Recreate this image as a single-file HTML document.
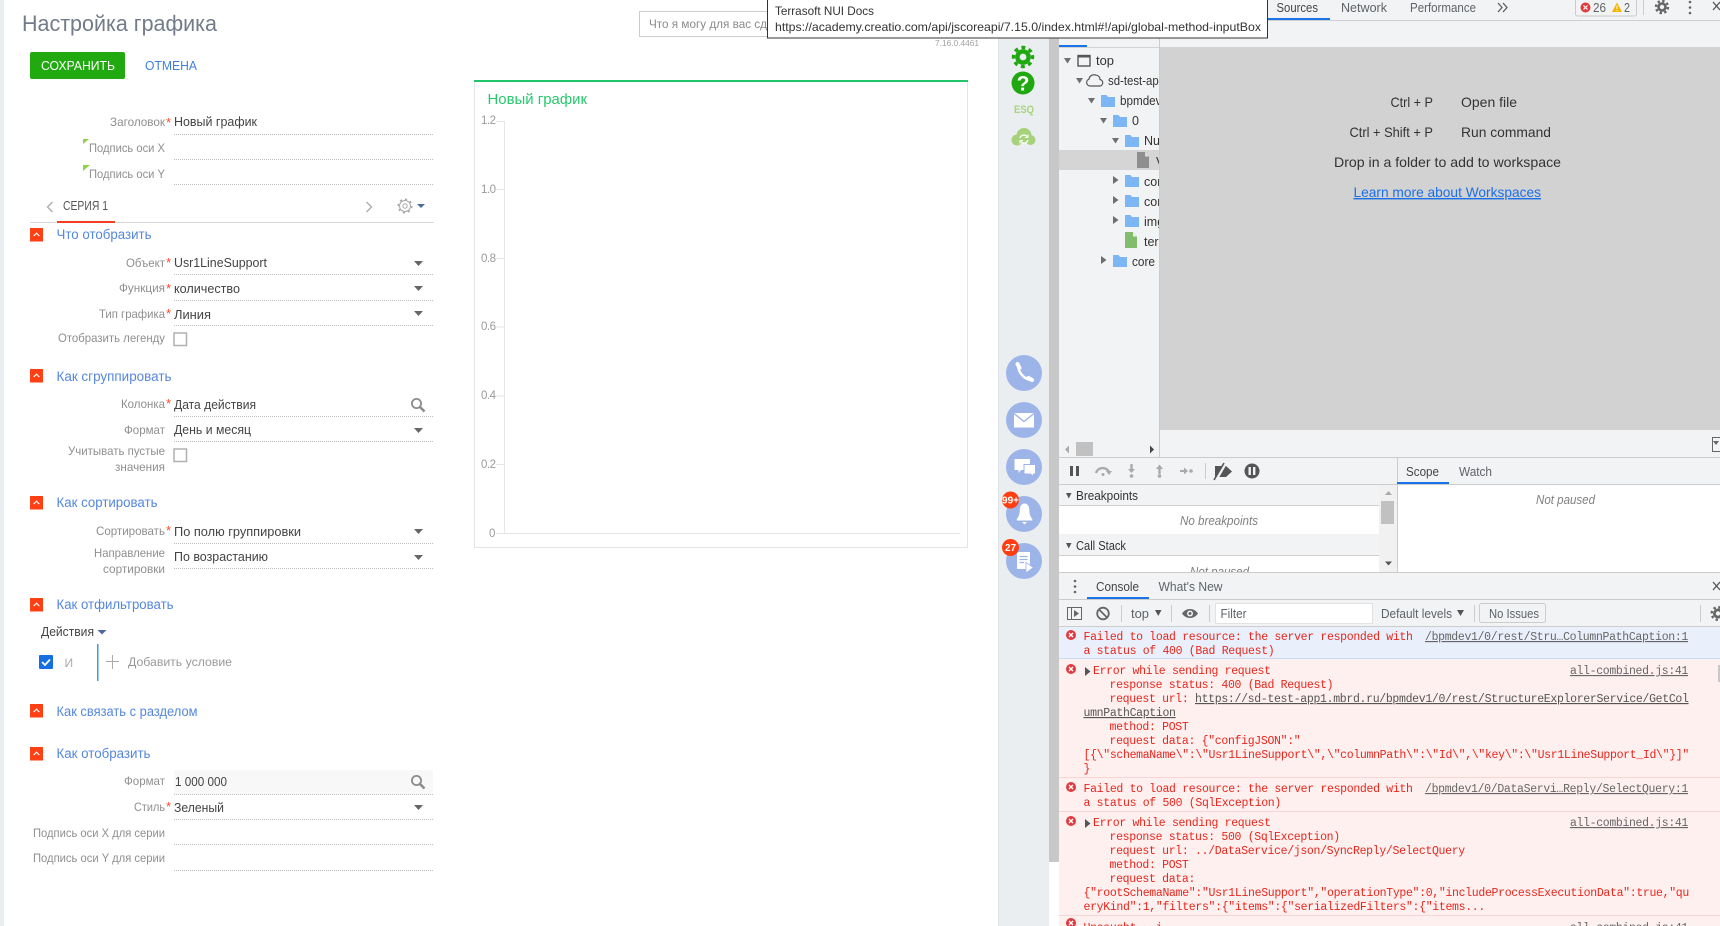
<!DOCTYPE html>
<html lang="ru">
<head>
<meta charset="utf-8">
<title>Настройка графика</title>
<style>
html,body{margin:0;padding:0;background:#fff;width:1720px;height:926px;overflow:hidden}
svg{display:block;font-family:"Liberation Sans","Noto Sans CJK SC",sans-serif}
text{white-space:pre}
.lb{font-size:12px;fill:#8f8f8f}
.v{font-size:13px;fill:#444}
.h{font-size:13.5px;fill:#5587dc}
.st{font-size:13px;fill:#ff4a2a}
.dt{font-size:12.5px;fill:#444}
.dg{font-size:12.5px;fill:#5f6368}
.it{font-size:12.5px;fill:#808080;font-style:italic}
.wk{font-size:14px;fill:#333}
.tr{font-size:12.5px;fill:#333}
.m{font-family:"Liberation Mono",monospace;font-size:11.5px;letter-spacing:-.32px;fill:#e8261c}
.k{font-family:"Liberation Mono",monospace;font-size:11.5px;letter-spacing:-.32px;fill:#555;text-decoration:underline}
.ku{font-family:"Liberation Mono",monospace;font-size:11.5px;letter-spacing:-.32px;fill:#666;text-decoration:underline}
.ax{font-size:11.5px;fill:#9a9a9a}
.dl{stroke:#bdbdbd;stroke-width:1;stroke-dasharray:1 1}
</style>
</head>
<body>
<svg xmlns="http://www.w3.org/2000/svg" width="1720" height="926" viewBox="0 0 1720 926">
<defs>
<g id="red"><rect width="13" height="13.5" fill="#ff3f14"/><path d="M3.7 8 6.5 5.2 9.3 8" fill="none" stroke="#fff" stroke-width="1.2"/></g>
<path id="car" d="M0 0H9L4.5 5Z" fill="#666"/>
<g id="srch" fill="none" stroke="#8c8c8c"><circle cx="5.5" cy="5.5" r="4.6" stroke-width="1.8"/><path d="M9 9 13.5 13.5" stroke-width="2.6"/></g>
<path id="fold" d="M0 0H5.5L7 2H14V12H0Z" fill="#7db6f4"/>
<path id="ta" d="M0 0H7L3.5 5.5Z" fill="#6e6e6e"/>
<path id="tr" d="M0 0 5.5 4 0 8Z" fill="#6e6e6e"/>
<g id="err"><circle r="5" fill="#e0393e"/><path d="M-2-2 2 2M2-2-2 2" stroke="#fff" stroke-width="1.4"/></g>
</defs>

<!-- left page -->
<rect width="4" height="926" fill="#e9edef"/>
<text x="22" y="31" font-size="22" fill="#737b8a" textLength="195" lengthAdjust="spacingAndGlyphs">Настройка графика</text>
<rect x="30" y="52" width="95" height="27" rx="2" fill="#20aa10"/>
<text x="41" y="70" font-size="13" fill="#fff" textLength="74" lengthAdjust="spacingAndGlyphs">СОХРАНИТЬ</text>
<text x="145" y="70" font-size="13" fill="#3f7fe0" textLength="52" lengthAdjust="spacingAndGlyphs">ОТМЕНА</text>

<text class="lb" x="110" y="126" textLength="55" lengthAdjust="spacingAndGlyphs">Заголовок</text><text class="st" x="166" y="127">*</text>
<text class="v" x="174" y="126" textLength="83" lengthAdjust="spacingAndGlyphs">Новый график</text>
<path class="dl" d="M174 134.500H434"/>
<path d="M83 139H89L83 144Z" fill="#8fd14f"/>
<text class="lb" x="89" y="152" textLength="76" lengthAdjust="spacingAndGlyphs">Подпись оси X</text>
<path class="dl" d="M174 159.500H434"/>
<path d="M83 165H90L83 171Z" fill="#8fd14f"/>
<text class="lb" x="89" y="178" textLength="76" lengthAdjust="spacingAndGlyphs">Подпись оси Y</text>
<path class="dl" d="M174 184.500H434"/>

<path d="M52.500 202 47.500 207 52.500 212" fill="none" stroke="#aaa" stroke-width="1.300"/>
<text x="63" y="210" font-size="13" fill="#555" textLength="45" lengthAdjust="spacingAndGlyphs">СЕРИЯ 1</text>
<rect x="30" y="222" width="404" height="1" fill="#d8d8d8"/>
<rect x="57" y="221" width="58" height="2" fill="#f0401e"/>
<path d="M366.500 202 371.500 207 366.500 212" fill="none" stroke="#aaa" stroke-width="1.300"/>
<circle cx="405" cy="206" r="5.500" fill="none" stroke="#a8a8a8" stroke-width="1"/><circle cx="405" cy="206" r="6.800" fill="none" stroke="#a8a8a8" stroke-width="1.500" stroke-dasharray="2.200 3.100"/><circle cx="405" cy="206" r="2.200" fill="none" stroke="#a8a8a8"/>
<path d="M417 204H425L421 208Z" fill="#4b6a9b"/>

<use href="#red" x="30" y="228"/>
<text class="h" x="56.500" y="239" textLength="95" lengthAdjust="spacingAndGlyphs">Что отобразить</text>
<text class="lb" x="126" y="267" textLength="39" lengthAdjust="spacingAndGlyphs">Объект</text><text class="st" x="166" y="267">*</text>
<text class="v" x="174" y="267" textLength="93" lengthAdjust="spacingAndGlyphs">Usr1LineSupport</text>
<use href="#car" x="414" y="261"/><path class="dl" d="M174 274.500H434"/>
<text class="lb" x="119" y="292" textLength="46" lengthAdjust="spacingAndGlyphs">Функция</text><text class="st" x="166" y="293">*</text>
<text class="v" x="174" y="293" textLength="66" lengthAdjust="spacingAndGlyphs">количество</text>
<use href="#car" x="414" y="286"/><path class="dl" d="M174 300.500H434"/>
<text class="lb" x="99" y="318" textLength="66" lengthAdjust="spacingAndGlyphs">Тип графика</text><text class="st" x="166" y="318">*</text>
<text class="v" x="174" y="319" textLength="37" lengthAdjust="spacingAndGlyphs">Линия</text>
<use href="#car" x="414" y="311"/><path class="dl" d="M174 325.500H434"/>
<text class="lb" x="58" y="342" textLength="107" lengthAdjust="spacingAndGlyphs">Отобразить легенду</text>
<rect x="174" y="333" width="12.500" height="12.500" fill="#fff" stroke="#b0b0b0" stroke-width="1.500"/>

<use href="#red" x="30" y="369"/>
<text class="h" x="56.500" y="381" textLength="115" lengthAdjust="spacingAndGlyphs">Как сгруппировать</text>
<text class="lb" x="121" y="408" textLength="44" lengthAdjust="spacingAndGlyphs">Колонка</text><text class="st" x="166" y="408">*</text>
<text class="v" x="174" y="409" textLength="82" lengthAdjust="spacingAndGlyphs">Дата действия</text>
<use href="#srch" x="411" y="398"/><path class="dl" d="M174 416.500H434"/>
<text class="lb" x="124" y="434" textLength="41" lengthAdjust="spacingAndGlyphs">Формат</text>
<text class="v" x="174" y="434" textLength="77" lengthAdjust="spacingAndGlyphs">День и месяц</text>
<use href="#car" x="414" y="428"/><path class="dl" d="M174 441.500H434"/>
<text class="lb" x="68" y="455" textLength="97" lengthAdjust="spacingAndGlyphs">Учитывать пустые</text>
<text class="lb" x="115" y="471" textLength="50" lengthAdjust="spacingAndGlyphs">значения</text>
<rect x="174" y="449" width="12.500" height="12.500" fill="#fff" stroke="#b0b0b0" stroke-width="1.500"/>

<use href="#red" x="30" y="496"/>
<text class="h" x="56.500" y="507" textLength="101" lengthAdjust="spacingAndGlyphs">Как сортировать</text>
<text class="lb" x="96" y="535" textLength="69" lengthAdjust="spacingAndGlyphs">Сортировать</text><text class="st" x="166" y="535">*</text>
<text class="v" x="174" y="536" textLength="127" lengthAdjust="spacingAndGlyphs">По полю группировки</text>
<use href="#car" x="414" y="529"/><path class="dl" d="M174 543.500H434"/>
<text class="lb" x="94" y="557" textLength="71" lengthAdjust="spacingAndGlyphs">Направление</text>
<text class="lb" x="103" y="573" textLength="62" lengthAdjust="spacingAndGlyphs">сортировки</text>
<text class="v" x="174" y="561" textLength="94" lengthAdjust="spacingAndGlyphs">По возрастанию</text>
<use href="#car" x="414" y="555"/><path class="dl" d="M174 568.500H434"/>

<use href="#red" x="30" y="598"/>
<text class="h" x="56.500" y="609" textLength="117" lengthAdjust="spacingAndGlyphs">Как отфильтровать</text>
<text x="41" y="636" font-size="13" fill="#444" textLength="53" lengthAdjust="spacingAndGlyphs">Действия</text>
<path d="M97.500 630H106.500L102 634.500Z" fill="#4b6a9b"/>
<rect x="39" y="655" width="14" height="14" rx="1" fill="#166fe0"/><path d="M42 662 45 665 50 659.500" fill="none" stroke="#fff" stroke-width="1.800"/>
<text x="64.500" y="667" font-size="12" fill="#aaa">И</text>
<rect x="97" y="644" width="1.500" height="37" fill="#3b9ed8"/>
<path d="M112.500 655V669M106 661.500H119" stroke="#aaa" stroke-width="1" fill="none"/>
<text x="128" y="666" font-size="12" fill="#999" textLength="104" lengthAdjust="spacingAndGlyphs">Добавить условие</text>

<use href="#red" x="30" y="704"/>
<text class="h" x="56.500" y="716" textLength="141" lengthAdjust="spacingAndGlyphs">Как связать с разделом</text>
<use href="#red" x="30" y="747"/>
<text class="h" x="56.500" y="758" textLength="94" lengthAdjust="spacingAndGlyphs">Как отобразить</text>
<text class="lb" x="124" y="785" textLength="41" lengthAdjust="spacingAndGlyphs">Формат</text>
<rect x="174" y="770" width="259" height="24" fill="#f8f8f8"/>
<text class="v" x="175" y="786" textLength="52" lengthAdjust="spacingAndGlyphs">1 000 000</text>
<use href="#srch" x="411" y="775"/><path class="dl" d="M174 794.500H434"/>
<text class="lb" x="134" y="811" textLength="31" lengthAdjust="spacingAndGlyphs">Стиль</text><text class="st" x="166" y="811">*</text>
<text class="v" x="174" y="812" textLength="50" lengthAdjust="spacingAndGlyphs">Зеленый</text>
<use href="#car" x="414" y="805"/><path class="dl" d="M174 819.500H434"/>
<text class="lb" x="33" y="837" textLength="132" lengthAdjust="spacingAndGlyphs">Подпись оси X для серии</text>
<path class="dl" d="M174 844.500H434"/>
<text class="lb" x="33" y="862" textLength="132" lengthAdjust="spacingAndGlyphs">Подпись оси Y для серии</text>
<path class="dl" d="M174 870.500H434"/>

<!-- search + chart -->
<rect x="639.500" y="11.500" width="140" height="25" fill="#fff" stroke="#ccc"/>
<text x="649" y="28" font-size="12" fill="#8a8a8a" textLength="118" lengthAdjust="spacingAndGlyphs">Что я могу для вас сд</text>
<text x="935" y="46" font-size="8.500" fill="#a0a0a0" textLength="44" lengthAdjust="spacingAndGlyphs">7.16.0.4461</text>
<rect x="474.500" y="81.500" width="493" height="466" fill="#fff" stroke="#e4e4e4"/>
<rect x="474" y="80" width="494" height="2" fill="#1fc669"/>
<text x="487.500" y="104" font-size="15" fill="#26c96e" textLength="99.500" lengthAdjust="spacingAndGlyphs">Новый график</text>
<path d="M504.500 121V533M496 121.500H504.500M496 189.500H504.500M496 258.500H504.500M496 327H504.500M496 396H504.500M496 464.500H504.500M496 533.500H960" stroke="#e6e6e6" fill="none"/>
<text class="ax" x="481" y="124" textLength="15">1.2</text>
<text class="ax" x="481" y="193" textLength="15">1.0</text>
<text class="ax" x="481" y="262" textLength="15">0.8</text>
<text class="ax" x="481" y="330" textLength="15">0.6</text>
<text class="ax" x="481" y="399" textLength="15">0.4</text>
<text class="ax" x="481" y="468" textLength="15">0.2</text>
<text class="ax" x="489" y="537">0</text>

<!-- sidebar -->
<rect x="998" width="51" height="926" fill="#eaeef0"/>
<rect x="998" width="1" height="926" fill="#dfe4e6"/>
<rect x="1049" width="10" height="862" fill="#c8c8c8"/>
<circle cx="1023" cy="57" r="7.800" fill="#1fa80f"/><circle cx="1023" cy="57" r="9.500" fill="none" stroke="#1fa80f" stroke-width="3.400" stroke-dasharray="3.800 3.660" transform="rotate(-11 1023 57)"/><circle cx="1023" cy="57" r="3.400" fill="#eaeef0"/>
<circle cx="1023" cy="83" r="11.500" fill="#1fa80f"/><text x="1023" y="90.500" font-size="21" font-weight="bold" fill="#fff" text-anchor="middle">?</text>
<text x="1014" y="113" font-size="11" font-weight="bold" fill="#a9d47e" textLength="20" lengthAdjust="spacingAndGlyphs">ESQ</text>
<g fill="#a5d27a"><circle cx="1024" cy="135.500" r="7.500"/><circle cx="1017" cy="140" r="5.500"/><circle cx="1030.500" cy="140" r="5"/></g>
<path d="M1020 138a4 4 0 0 1 7-1.500M1028 140a4 4 0 0 1-7 1.500" fill="none" stroke="#fff" stroke-width="1.300"/>
<path d="M1028 134.500V137.500H1025M1020 143.500V140.500H1023" fill="none" stroke="#fff" stroke-width="1"/>

<circle cx="1024" cy="373" r="18" fill="#9db4e9"/>
<path d="M1018 365.500C1018.500 373 1024.500 379.500 1031.500 380" fill="none" stroke="#fff" stroke-width="2.400"/><path d="M1017.500 364 1019.500 368M1028.500 378 1032 380" stroke="#fff" stroke-width="4" stroke-linecap="round"/>
<circle cx="1024" cy="420" r="18" fill="#9db4e9"/>
<rect x="1014" y="413" width="20" height="14.500" fill="#fff"/><path d="M1014 413.500 1024 421.500 1034 413.500" fill="none" stroke="#9db4e9" stroke-width="1.400"/>
<circle cx="1024" cy="467" r="18" fill="#9db4e9"/>
<path d="M1014.500 459H1030V470H1021L1018.500 473V470H1014.500Z" fill="#fff"/>
<path d="M1024 464.500H1035.500V474H1033.500V476.500L1030.500 474H1024Z" fill="#fff" stroke="#9db4e9"/>
<circle cx="1024" cy="514" r="18" fill="#9db4e9"/>
<path d="M1024.500 503.500c-3.500 0-4.700 3.500-4.700 6.500 0 4-1.300 7-3 9v1.500h15.500v-1.500c-1.700-2-3-5-3-9 0-3-1.300-6.500-4.800-6.500Z" fill="#fff"/><path d="M1022 522H1027L1024.500 524.500Z" fill="#fff"/>
<circle cx="1024" cy="561" r="18" fill="#9db4e9"/>
<path d="M1017 552H1030V569H1017Z" fill="#fff"/><path d="M1019.500 556.500H1027.500M1019.500 559.500H1027.500M1019.500 562.500H1024" stroke="#9db4e9" stroke-width="1.200"/>
<path d="M1026 562.500 1033.500 567.500 1026 573Z" fill="#fff" stroke="#9db4e9" stroke-width=".8"/>
<circle cx="1010.500" cy="500" r="8.500" fill="#ff3d12"/><text x="1010.500" y="503.500" font-size="10" font-weight="bold" fill="#fff" text-anchor="middle">99+</text>
<circle cx="1010.500" cy="547.500" r="8.500" fill="#ff3d12"/><text x="1010.500" y="551" font-size="10" font-weight="bold" fill="#fff" text-anchor="middle">27</text>

<!-- devtools background -->
<rect x="1059" width="661" height="926" fill="#f1f3f4"/>
<rect x="1059" y="20" width="661" height="1" fill="#cfcfcf"/>
<rect x="1059" y="47" width="661" height="1" fill="#d4d4d4"/>
<rect x="1059" y="45" width="28" height="2" fill="#1a73e8"/>

<!-- top tabs -->
<rect x="1268" y="18" width="62" height="2" fill="#1a73e8"/>
<text class="dt" x="1276.500" y="12" textLength="41.500" lengthAdjust="spacingAndGlyphs">Sources</text>
<text class="dg" x="1341" y="12" textLength="46" lengthAdjust="spacingAndGlyphs">Network</text>
<text class="dg" x="1410" y="12" textLength="66" lengthAdjust="spacingAndGlyphs">Performance</text>
<path d="M1498 3 1502 7.500 1498 12M1503 3 1507 7.500 1503 12" fill="none" stroke="#555" stroke-width="1.200"/>
<rect x="1575.500" y="-2" width="61" height="18" rx="2" fill="none" stroke="#ccc"/>
<circle cx="1585.500" cy="7.500" r="5" fill="#e0393e"/><path d="M1583.500 5.500 1587.500 9.500M1587.500 5.500 1583.500 9.500" stroke="#fff" stroke-width="1.200"/>
<text class="dg" x="1593" y="12" textLength="13" lengthAdjust="spacingAndGlyphs">26</text>
<path d="M1617 2.500 1622 12H1612Z" fill="#f4b400"/><path d="M1617 5.500V9M1617 10V11" stroke="#fff"/>
<text class="dg" x="1624" y="12" textLength="6" lengthAdjust="spacingAndGlyphs">2</text>
<rect x="1643" y="0" width="1" height="15" fill="#ccc"/>
<circle cx="1662" cy="7" r="4.800" fill="#666"/><circle cx="1662" cy="7" r="6" fill="none" stroke="#666" stroke-width="2.400" stroke-dasharray="2.400 2.310"/><circle cx="1662" cy="7" r="2.200" fill="#f1f3f4"/>
<circle cx="1690" cy="2" r="1.300" fill="#666"/><circle cx="1690" cy="7.500" r="1.300" fill="#666"/><circle cx="1690" cy="13" r="1.300" fill="#666"/>
<path d="M1713 2 1720 10M1720 2 1713 10" stroke="#555" stroke-width="1.300"/>

<!-- navigator tree -->
<rect x="1059" y="150" width="100" height="20" fill="#d5d5d5"/>
<use href="#ta" x="1064" y="58"/>
<rect x="1078" y="55.500" width="12" height="10.500" fill="none" stroke="#555" stroke-width="1.400"/><rect x="1078" y="55" width="12" height="2.500" fill="#555"/>
<text class="tr" x="1096" y="65" textLength="18" lengthAdjust="spacingAndGlyphs">top</text>
<use href="#ta" x="1076" y="78"/>
<path d="M1090 86a3.500 3.500 0 0 1-1-6.800 5 5 0 0 1 7-4 4 4 0 0 1 4 4.300 3.300 3.300 0 0 1 0 6.500Z" fill="none" stroke="#555" stroke-width="1.200"/>
<text class="tr" x="1108" y="85" textLength="57" lengthAdjust="spacingAndGlyphs">sd-test-app</text>
<use href="#ta" x="1088" y="98"/><use href="#fold" x="1101" y="95"/>
<text class="tr" x="1120" y="105" textLength="48" lengthAdjust="spacingAndGlyphs">bpmdev1</text>
<use href="#ta" x="1100" y="118"/><use href="#fold" x="1113" y="115"/>
<text class="tr" x="1132" y="125">0</text>
<use href="#ta" x="1112" y="138"/><use href="#fold" x="1125" y="135"/>
<text class="tr" x="1144" y="145">Nui</text>
<path d="M1137 152H1145L1149 156.500V168H1137Z" fill="#8e8e8e"/><path d="M1145 152V156.500H1149Z" fill="#ddd"/>
<text class="tr" x="1156" y="166">V</text>
<use href="#tr" x="1113" y="176"/><use href="#fold" x="1125" y="175"/><text class="tr" x="1144" y="186">core</text>
<use href="#tr" x="1113" y="196"/><use href="#fold" x="1125" y="195"/><text class="tr" x="1144" y="206">core</text>
<use href="#tr" x="1113" y="216"/><use href="#fold" x="1125" y="215"/><text class="tr" x="1144" y="226">img</text>
<path d="M1125 232H1133L1137 236.500V248H1125Z" fill="#82bd6e"/><path d="M1133 232V236.500H1137Z" fill="#e6f2e0"/>
<text class="tr" x="1144" y="246">term</text>
<use href="#tr" x="1101" y="256"/><use href="#fold" x="1113" y="255"/><text class="tr" x="1132" y="266" textLength="23" lengthAdjust="spacingAndGlyphs">core</text>
<rect x="1160" y="48" width="560" height="382" fill="#d2d2d2"/>
<rect x="1160" y="21" width="560" height="26" fill="#f1f3f4"/>
<rect x="1159" y="20" width="1" height="437" fill="#ccc"/>

<text class="wk" x="1390.500" y="107" textLength="42.500" lengthAdjust="spacingAndGlyphs">Ctrl + P</text>
<text class="wk" x="1461" y="107" textLength="56" lengthAdjust="spacingAndGlyphs">Open file</text>
<text class="wk" x="1349.500" y="137" textLength="83.500" lengthAdjust="spacingAndGlyphs">Ctrl + Shift + P</text>
<text class="wk" x="1461" y="137" textLength="90" lengthAdjust="spacingAndGlyphs">Run command</text>
<text class="wk" x="1334" y="167" textLength="227" lengthAdjust="spacingAndGlyphs">Drop in a folder to add to workspace</text>
<text x="1353.500" y="197" font-size="14" fill="#1a6fe8" text-decoration="underline" textLength="187.500" lengthAdjust="spacingAndGlyphs">Learn more about Workspaces</text>

<!-- navigator bottom -->
<path d="M1069 445.500V453.500L1065 449.500Z" fill="#aaa"/><rect x="1076" y="442" width="17" height="14" fill="#c1c1c1"/><path d="M1150 445.500V453.500L1154 449.500Z" fill="#444"/>
<rect x="1712.500" y="437.500" width="8" height="14" fill="none" stroke="#666"/><path d="M1713 441H1719L1716 445Z" fill="#666"/>
<rect x="1059" y="457" width="661" height="1" fill="#ccc"/>

<!-- debugger -->
<rect x="1070" y="466" width="3" height="10" fill="#555"/><rect x="1076" y="466" width="3" height="10" fill="#555"/>
<path d="M1096 473a7 7 0 0 1 13-1" fill="none" stroke="#aaa" stroke-width="2.400"/><path d="M1106 471H1112L1109 475Z" fill="#aaa"/><circle cx="1103" cy="474.500" r="1.500" fill="#aaa"/>
<path d="M1131.500 464V470" stroke="#aaa" stroke-width="2.400"/><path d="M1128 469H1135L1131.500 473Z" fill="#aaa"/><circle cx="1131.500" cy="476" r="1.800" fill="#aaa"/>
<path d="M1159.500 468V474" stroke="#aaa" stroke-width="2.400"/><path d="M1156 469H1163L1159.500 464.500Z" fill="#aaa"/><circle cx="1159.500" cy="476" r="1.800" fill="#aaa"/>
<path d="M1180 471H1185" stroke="#aaa" stroke-width="2"/><path d="M1184 467.500V474.500L1188 471Z" fill="#aaa"/><circle cx="1191" cy="471" r="1.800" fill="#aaa"/>
<rect x="1205" y="463" width="1" height="16" fill="#ccc"/>
<path d="M1215 466H1226L1232 471.500 1226 477H1215Z" fill="#555"/><path d="M1226 462 1215 481" stroke="#f1f3f4" stroke-width="3.500"/><path d="M1224 463 1214 480" stroke="#555" stroke-width="1.600"/>
<circle cx="1252" cy="471" r="7.500" fill="#555"/><rect x="1248.500" y="467" width="2.400" height="8" fill="#f1f3f4"/><rect x="1253" y="467" width="2.400" height="8" fill="#f1f3f4"/>
<rect x="1059" y="484" width="661" height="1" fill="#ccc"/>
<rect x="1397" y="458" width="1" height="114" fill="#ccc"/>
<rect x="1397" y="482" width="52" height="2" fill="#1a73e8"/>
<text class="dt" x="1406" y="476" textLength="33" lengthAdjust="spacingAndGlyphs">Scope</text>
<text class="dg" x="1459" y="476" textLength="33" lengthAdjust="spacingAndGlyphs">Watch</text>
<rect x="1398" y="485" width="322" height="87" fill="#fff"/>
<text class="it" x="1536" y="504" textLength="59" lengthAdjust="spacingAndGlyphs">Not paused</text>

<path d="M1066 493H1071.500L1068.750 498.500Z" fill="#555"/>
<text class="tr" x="1076" y="500" textLength="62" lengthAdjust="spacingAndGlyphs">Breakpoints</text>
<rect x="1059" y="505" width="320" height="1" fill="#d0d0d0"/>
<rect x="1059" y="506" width="320" height="28" fill="#fff"/>
<text class="it" x="1180" y="525" textLength="78" lengthAdjust="spacingAndGlyphs">No breakpoints</text>
<path d="M1066 543H1071.500L1068.750 548.500Z" fill="#555"/>
<text class="tr" x="1076" y="550" textLength="50" lengthAdjust="spacingAndGlyphs">Call Stack</text>
<rect x="1059" y="555" width="320" height="1" fill="#d0d0d0"/>
<rect x="1059" y="556" width="320" height="16" fill="#fff"/>
<text class="it" x="1190" y="576" textLength="59" lengthAdjust="spacingAndGlyphs">Not paused</text>
<rect x="1379" y="485" width="18" height="87" fill="#f1f1f1"/>
<path d="M1385 495H1392L1388.500 491Z" fill="#aaa"/><rect x="1381" y="501" width="13" height="23" fill="#c1c1c1"/><path d="M1385 561.500H1392L1388.500 565.500Z" fill="#555"/>

<!-- drawer -->
<rect x="1059" y="572" width="661" height="27" fill="#f1f3f4"/>
<rect x="1059" y="572" width="661" height="1" fill="#ccc"/>
<circle cx="1075" cy="581" r="1.300" fill="#666"/><circle cx="1075" cy="586.500" r="1.300" fill="#666"/><circle cx="1075" cy="592" r="1.300" fill="#666"/>
<text class="dt" x="1096" y="591" textLength="43" lengthAdjust="spacingAndGlyphs">Console</text>
<text class="dg" x="1158.500" y="591" textLength="64" lengthAdjust="spacingAndGlyphs">What's New</text>
<rect x="1087" y="597" width="62" height="2" fill="#1a73e8"/>
<path d="M1713 582 1720 590M1720 582 1713 590" stroke="#555" stroke-width="1.300"/>
<rect x="1059" y="599" width="661" height="1" fill="#ccc"/>
<rect x="1067.500" y="607.500" width="14" height="12" fill="none" stroke="#666"/><rect x="1071" y="608" width="1" height="11" fill="#666"/><path d="M1074 610V617L1079 613.500Z" fill="#666"/>
<circle cx="1103" cy="613.500" r="5.800" fill="none" stroke="#666" stroke-width="1.800"/><path d="M1099 609.500 1107 617.500" stroke="#666" stroke-width="1.800"/>
<rect x="1121" y="605" width="1" height="17" fill="#ccc"/>
<text class="dg" x="1131" y="618" textLength="18" lengthAdjust="spacingAndGlyphs">top</text>
<path d="M1155 610H1161.500L1158.250 616Z" fill="#555"/>
<rect x="1171" y="605" width="1" height="17" fill="#ccc"/>
<path d="M1182 613.500C1186 607.500 1194 607.500 1198 613.500 1194 619.500 1186 619.500 1182 613.500Z" fill="#666"/><circle cx="1190" cy="613.500" r="3" fill="#f1f3f4"/><circle cx="1190" cy="613.500" r="1.500" fill="#666"/>
<rect x="1209" y="605" width="1" height="17" fill="#ccc"/>
<rect x="1215.500" y="603.500" width="157" height="20" fill="#fff" stroke="#e2e2e2"/>
<text class="dg" x="1220.500" y="618" textLength="26" lengthAdjust="spacingAndGlyphs">Filter</text>
<text class="dg" x="1381" y="618" textLength="71" lengthAdjust="spacingAndGlyphs">Default levels</text>
<path d="M1457 610H1464L1460.500 616Z" fill="#555"/>
<rect x="1474" y="605" width="1" height="17" fill="#ccc"/>
<rect x="1479.500" y="603.500" width="66" height="19" rx="2" fill="none" stroke="#ccc"/>
<text class="dg" x="1489" y="618" textLength="50" lengthAdjust="spacingAndGlyphs">No Issues</text>
<rect x="1700" y="605" width="1" height="17" fill="#ccc"/>
<circle cx="1718" cy="613.500" r="5" fill="#666"/><circle cx="1718" cy="613.500" r="6.300" fill="none" stroke="#666" stroke-width="2.400" stroke-dasharray="2.400 2.550"/><circle cx="1718" cy="613.500" r="2.200" fill="#f1f3f4"/>
<rect x="1059" y="626" width="661" height="1" fill="#ccc"/>

<!-- console rows -->
<rect x="1059" y="627" width="661" height="31" fill="#e9f0fb"/>
<rect x="1059" y="658" width="661" height="268" fill="#fff0f0"/>
<rect x="1059" y="658" width="661" height="1" fill="#c9dcf5"/>
<rect x="1059" y="777" width="661" height="1" fill="#f8d4d4"/>
<rect x="1059" y="811" width="661" height="1" fill="#f8d4d4"/>
<rect x="1059" y="915" width="661" height="1" fill="#f8d4d4"/>

<use href="#err" x="1071" y="635"/>
<use href="#err" x="1071" y="669"/>
<path d="M1085 667V676L1090.500 671.500Z" fill="#555"/>
<use href="#err" x="1071" y="787"/>
<use href="#err" x="1071" y="821"/>
<path d="M1085 819V828L1090.500 823.500Z" fill="#555"/>
<use href="#err" x="1071" y="923"/>

<g transform="translate(0 1)">
<text class="m" x="1083.500" y="639">Failed to load resource: the server responded with</text>
<text class="ku" x="1425" y="639" textLength="263" lengthAdjust="spacingAndGlyphs">/bpmdev1/0/rest/Stru…ColumnPathCaption:1</text>
<text class="m" x="1083.500" y="653">a status of 400 (Bad Request)</text>

<text class="m" x="1093" y="673">Error while sending request</text>
<text class="ku" x="1570" y="673" textLength="118" lengthAdjust="spacingAndGlyphs">all-combined.js:41</text>
<text class="m" x="1109.500" y="687">response status: 400 (Bad Request)</text>
<text class="m" x="1109.500" y="701">request url:</text>
<text class="k" x="1195" y="701">https://sd-test-app1.mbrd.ru/bpmdev1/0/rest/StructureExplorerService/GetCol</text>
<text class="k" x="1083.500" y="715">umnPathCaption</text>
<text class="m" x="1109.500" y="729">method: POST</text>
<text class="m" x="1109.500" y="743">request data: {"configJSON":"</text>
<text class="m" x="1083.500" y="757">[{\"schemaName\":\"Usr1LineSupport\",\"columnPath\":\"Id\",\"key\":\"Usr1LineSupport_Id\"}]"</text>
<text class="m" x="1083.500" y="771">}</text>

<text class="m" x="1083.500" y="791">Failed to load resource: the server responded with</text>
<text class="ku" x="1425" y="791" textLength="263" lengthAdjust="spacingAndGlyphs">/bpmdev1/0/DataServi…Reply/SelectQuery:1</text>
<text class="m" x="1083.500" y="805">a status of 500 (SqlException)</text>

<text class="m" x="1093" y="825">Error while sending request</text>
<text class="ku" x="1570" y="825" textLength="118" lengthAdjust="spacingAndGlyphs">all-combined.js:41</text>
<text class="m" x="1109.500" y="839">response status: 500 (SqlException)</text>
<text class="m" x="1109.500" y="853">request url: ../DataService/json/SyncReply/SelectQuery</text>
<text class="m" x="1109.500" y="867">method: POST</text>
<text class="m" x="1109.500" y="881">request data:</text>
<text class="m" x="1083.500" y="895">{"rootSchemaName":"Usr1LineSupport","operationType":0,"includeProcessExecutionData":true,"qu</text>
<text class="m" x="1083.500" y="909">eryKind":1,"filters":{"items":{"serializedFilters":{"items...</text>

<text class="m" x="1083.500" y="930">Uncaught ▸ i</text>
<text class="ku" x="1570" y="930" textLength="118" lengthAdjust="spacingAndGlyphs">all-combined.js:41</text>
</g>
<rect x="1718" y="665" width="2" height="17" fill="#c8c8c8"/>

<!-- tooltip -->
<rect x="767.500" y="-2" width="500" height="40" fill="#fff" stroke="#333"/>
<text x="775" y="15" font-size="12" fill="#333" textLength="99" lengthAdjust="spacingAndGlyphs">Terrasoft NUI Docs</text>
<text x="775" y="31" font-size="12" fill="#333" textLength="486" lengthAdjust="spacingAndGlyphs">https://academy.creatio.com/api/jscoreapi/7.15.0/index.html#!/api/global-method-inputBox</text>
</svg>
</body>
</html>
